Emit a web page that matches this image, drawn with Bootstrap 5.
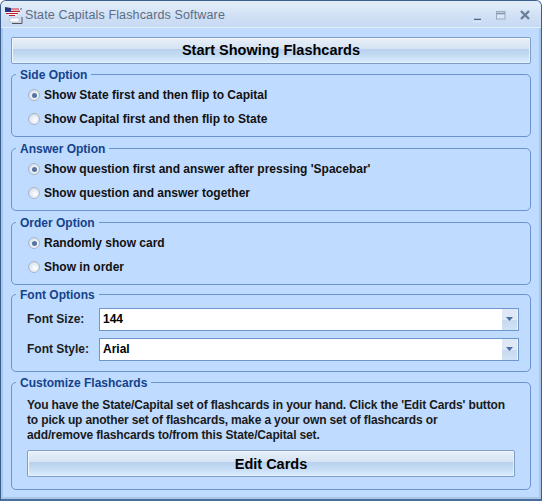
<!DOCTYPE html>
<html lang="en">
<head>
<meta charset="utf-8">
<title>State Capitals Flashcards Software</title>
<link rel="stylesheet" href="https://cdn.jsdelivr.net/npm/bootstrap@5.3.0/dist/css/bootstrap.min.css">
<style>
html,body{margin:0;height:501px;overflow:hidden;background:#fff}
body{font-family:"Liberation Sans",Arial,sans-serif;font-size:12px;color:#111}
.win{width:542px;height:501px;background:#bfdbff;border:1px solid #3a5f8e;border-bottom:2px solid #4a6f9e;border-radius:6px 6px 0 0;box-shadow:inset 2px 0 0 #a9c6ea,inset -2px 0 0 #a9c6ea,inset 0 -2px 0 #a9c6ea;overflow:hidden}
.tbar{height:27px;padding:0 11px 0 3px;background:linear-gradient(#e3edf9 0,#dbe8f8 30%,#cfdff4 60%,#c7daf3 100%);border-bottom:1px solid #e4effd;color:#5a6d85;font-size:12.5px;letter-spacing:.14px}
.tbar svg{flex:none}
.logo{margin-top:2px}
.ttl{margin-left:2px;margin-top:3px}
.wbtns{margin-left:auto;gap:14px;margin-top:2px}
.body-pad{padding:9px 10px 0 10px}
.gbtn{display:block;width:100%;padding:0;background:linear-gradient(#e7eff9 0,#d6e3f3 45%,#b9d1ee 46%,#c6dcf4 70%,#dbedff 100%);border:1px solid #7f9ec6;border-radius:2px;box-shadow:inset 1px 1px 0 #f4f8fd,inset -1px -1px 0 #e6f0fc;font:bold 14.5px "Liberation Sans",Arial,sans-serif;color:#000}
.gbtn-top{height:27px;padding-bottom:1px}
.gbtn-edit{height:27px}
.grp{border:1px solid #6b94cc;border-radius:5px;margin:0;padding:0 11px 0 15px;min-width:0}
.grp legend{float:none;width:auto;margin:0 0 0 -11px;padding:2px 4px 0;font:bold 12px/14px "Liberation Sans",Arial,sans-serif;color:#15428b}
.g-side{margin-top:2px;height:71px}
.g-ans{margin-top:3px;height:71px}
.g-ord{margin-top:3px;height:71px}
.g-font{margin-top:1px;height:86px}
.g-cust{margin-top:2px;height:116px}
.optrow{height:24px;font-weight:700;gap:4px}
.opts{padding-top:1px;margin-left:-1px}
.dot{width:12px;height:12px;margin-left:2px;border-radius:50%;border:1px solid #a9b5c6;background:radial-gradient(circle at 60% 60%,#fff 0,#e6edf5 45%,#c4cedb 100%);flex:none;display:flex;align-items:center;justify-content:center}
.dot i{display:block;width:5px;height:5px;border-radius:50%;background:#56749f}
.frow{height:26px;font-weight:700}
.flab{width:72px;flex:none;color:#1b1b1b}
.combo{width:420px;flex:none;height:23px;background:#fff;border:1px solid #6f96cb;font-weight:700;font-size:12px;padding-left:3px;color:#000}
.combo .val{flex:1}
.arr{width:17px;height:21px;border-left:1px solid #fff;background:linear-gradient(#dfe9f6 0,#dfe9f6 50%,#c6d9f0 51%,#d2e2f5 100%);border-right:1px solid #eef4fb;display:flex;align-items:center;justify-content:center}
.arr svg{display:block}
.cust-txt{font-weight:700;line-height:15px;padding-top:8px;margin:0;white-space:nowrap;color:#1a1a1a;letter-spacing:-.14px}
.editwrap{margin-top:7px;margin-right:4px}
</style>
</head>
<body>
<div class="win">
  <div class="tbar d-flex align-items-center">
    <svg class="logo" width="19" height="19" viewBox="0 0 19 19">
      <path d="M1 1l6 1h6l3-.5-1 2 1 1-1 3-2 1v2l-2-1H6L3 8 1 6z" fill="#f3f3f8"/>
      <path d="M1 1l6 1v4H1z" fill="#27357f"/>
      <path d="M7 3h8M7 5.4h9M2 7.5h12M5 9.5h6" stroke="#c01f2a" stroke-width="1.2" fill="none"/>
      <path d="M17 2l1 1-2 1z" fill="#1c2a6a"/>
      <rect x="6" y="12" width="9" height="4" fill="#fff" stroke="#a5b3c6" stroke-width=".6"/>
      <path d="M8 17.5h10V11" stroke="#555" fill="none"/>
    </svg>
    <span class="ttl">State Capitals Flashcards Software</span>
    <div class="wbtns d-flex align-items-center">
      <svg width="10" height="10" viewBox="0 0 10 10" class="mt-1"><path d="M2 7.5h7" stroke="#46678f" stroke-width="1.6"/><path d="M2 9h7" stroke="#eef4fb"/></svg>
      <svg width="10" height="9" viewBox="0 0 10 9"><rect x=".5" y=".5" width="8.5" height="7.5" fill="#d9e5f5" stroke="#9aa9bc"/><path d="M1 2.5h8" stroke="#8092aa" stroke-width="1.5"/></svg>
      <svg width="10" height="10" viewBox="0 0 10 10"><path d="M1 1l8 8M9 1l-8 8" stroke="#6b7f99" stroke-width="2.4"/></svg>
    </div>
  </div>
  <div class="body-pad">
    <button type="button" class="gbtn gbtn-top">Start Showing Flashcards</button>

    <fieldset class="grp g-side">
      <legend>Side Option</legend>
      <div class="opts">
        <div class="optrow d-flex align-items-center"><span class="dot"><i></i></span>Show State first and then flip to Capital</div>
        <div class="optrow d-flex align-items-center"><span class="dot"></span>Show Capital first and then flip to State</div>
      </div>
    </fieldset>

    <fieldset class="grp g-ans">
      <legend>Answer Option</legend>
      <div class="opts">
        <div class="optrow d-flex align-items-center"><span class="dot"><i></i></span>Show question first and answer after pressing 'Spacebar'</div>
        <div class="optrow d-flex align-items-center"><span class="dot"></span>Show question and answer together</div>
      </div>
    </fieldset>

    <fieldset class="grp g-ord">
      <legend>Order Option</legend>
      <div class="opts">
        <div class="optrow d-flex align-items-center"><span class="dot"><i></i></span>Randomly show card</div>
        <div class="optrow d-flex align-items-center"><span class="dot"></span>Show in order</div>
      </div>
    </fieldset>

    <fieldset class="grp g-font">
      <legend>Font Options</legend>
      <div class="frow d-flex align-items-center mt-1"><span class="flab">Font Size:</span>
        <div class="combo d-flex align-items-center"><span class="val">144</span><span class="arr"><svg width="7" height="4" viewBox="0 0 7 4"><path d="M0 0h7L3.5 4z" fill="#4a6ea5"/></svg></span></div></div>
      <div class="frow d-flex align-items-center mt-1"><span class="flab">Font Style:</span>
        <div class="combo d-flex align-items-center"><span class="val">Arial</span><span class="arr"><svg width="7" height="4" viewBox="0 0 7 4"><path d="M0 0h7L3.5 4z" fill="#4a6ea5"/></svg></span></div></div>
    </fieldset>

    <fieldset class="grp g-cust">
      <legend>Customize Flashcards</legend>
      <p class="cust-txt">You have the State/Capital set of flashcards in your hand. Click the 'Edit Cards' button<br>to pick up another set of flashcards, make a your own set of flashcards or<br>add/remove flashcards to/from this State/Capital set.</p>
      <div class="editwrap"><button type="button" class="gbtn gbtn-edit">Edit Cards</button></div>
    </fieldset>
  </div>
</div>
<script src="https://cdn.jsdelivr.net/npm/bootstrap@5.3.0/dist/js/bootstrap.bundle.min.js"></script>
</body>
</html>
